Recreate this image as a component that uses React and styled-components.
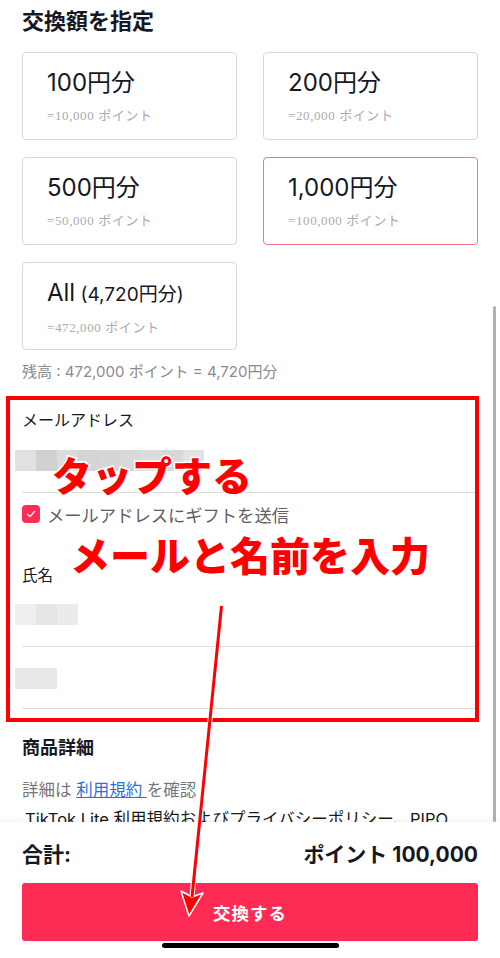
import React from 'react';
import styled, { createGlobalStyle } from 'styled-components';

const GlobalStyle = createGlobalStyle`
  html, body {
    margin: 0;
    padding: 0;
    background: #ffffff;
  }
  body {
    font-family: "Inter", "Noto Sans CJK JP", sans-serif;
    color: #161823;
  }
`;

const Page = styled.div`
  position: relative;
  width: 500px;
  height: 958px;
  display: flex;
  flex-direction: column;
  overflow: hidden;
  background: #ffffff;
`;

const Scroll = styled.div`
  position: relative;
  flex: 1;
  overflow: hidden;
  padding: 0 22px;
`;

const ScrollBar = styled.div`
  position: absolute;
  right: 4px;
  top: 306px;
  bottom: 0;
  width: 3px;
  border-radius: 2px;
  background: #b1b1b1;
`;

const Title = styled.h2`
  margin: 7px 0 0;
  font-size: 22px;
  line-height: 28px;
  font-weight: 700;
`;

const Grid = styled.div`
  margin-top: 17px;
  display: grid;
  grid-template-columns: 215px 215px;
  column-gap: 26px;
  row-gap: 17px;
`;

const Card = styled.div`
  box-sizing: border-box;
  height: 88px;
  padding: 15px 24px 0;
  border: 1px solid ${p => (p.$active ? '#f3758c' : '#d8d8d8')};
  border-radius: 4px;
  background: #fff;
`;

const Amount = styled.div`
  font-size: 24px;
  line-height: 30px;
  font-weight: 400;
  color: #161823;
  white-space: nowrap;

  small {
    font-size: 19px;
  }
`;

const Points = styled.div`
  margin-top: 9px;
  font-family: "Liberation Serif", "Noto Sans CJK JP", serif;
  font-size: 13px;
  line-height: 18px;
  color: #ababab;
  letter-spacing: 0.6px;
`;

const Balance = styled.div`
  margin-top: 12px;
  font-size: 15px;
  line-height: 20px;
  color: #8a8b91;
`;

const Form = styled.div`
  position: relative;
  margin-top: 14px;
  height: 326px;
  box-sizing: border-box;
  padding-top: 13px;
`;

const Highlight = styled.div`
  position: absolute;
  left: -16px;
  right: -1px;
  top: 0;
  bottom: 0;
  border: 4px solid #ff0000;
  pointer-events: none;
`;

const Label = styled.div`
  font-size: ${p => p.$size || 16}px;
  line-height: 22px;
  color: #161823;
  margin-top: ${p => p.$top || 0}px;
`;

const Field = styled.div`
  box-sizing: border-box;
  height: ${p => p.$h}px;
  padding-top: ${p => p.$pad}px;
  border-bottom: 1.5px solid #dcdcdc;
`;

const Mosaic = styled.div`
  display: flex;
  margin-left: -7px;
  height: 21px;
`;

const Cell = styled.span`
  width: 21px;
  height: 21px;
  background: ${p => p.$c};
`;

const CheckRow = styled.label`
  display: flex;
  align-items: center;
  gap: 7px;
  margin-top: 10px;
  height: 22px;
  font-size: 17.3px;
  color: #5e5f66;
`;

const Box = styled.span`
  flex: none;
  width: 18px;
  height: 18px;
  border-radius: 4px;
  background: #fe2c55;
  display: flex;
  align-items: center;
  justify-content: center;
`;

const Callout = styled.div`
  position: absolute;
  left: ${p => p.$x}px;
  top: ${p => p.$y}px;
  font-size: 40px;
  line-height: 40px;
  font-weight: 900;
  color: #ff0000;
  white-space: nowrap;
  -webkit-text-stroke: 3px #ffffff;
  paint-order: stroke fill;
  pointer-events: none;
`;

const SectionTitle = styled.h3`
  margin: 14px 0 0;
  font-size: 18px;
  line-height: 24px;
  font-weight: 700;
`;

const Detail = styled.p`
  margin: ${p => p.$top || 0}px 0 0;
  padding-left: ${p => (p.$dark ? 3 : 0)}px;
  font-size: 16.5px;
  line-height: 22px;
  color: ${p => (p.$dark ? '#161823' : '#75767c')};
  white-space: nowrap;

  a {
    color: #2f6fdd;
    text-decoration: underline;
  }
`;

const Footer = styled.div`
  height: 136px;
  box-sizing: border-box;
  padding: 20px 22px 0;
  background: #fff;
  box-shadow: 0 -2px 6px rgba(0, 0, 0, 0.05);
  display: flex;
  flex-direction: column;
  align-items: stretch;
  position: relative;
`;

const TotalRow = styled.div`
  display: flex;
  justify-content: space-between;
  font-size: 21px;
  line-height: 26px;
  font-weight: 700;
`;

const Button = styled.button`
  margin-top: 15px;
  height: 58px;
  border: none;
  border-radius: 3px;
  background: #fe2c55;
  color: #fff;
  font-family: inherit;
  font-size: 17.5px;
  font-weight: 600;
  letter-spacing: 1px;
`;

const HomeBar = styled.div`
  align-self: center;
  margin-top: 2px;
  width: 177px;
  height: 5px;
  border-radius: 3px;
  background: #000;
`;

const ArrowLayer = styled.svg`
  position: absolute;
  left: 0;
  top: 0;
  pointer-events: none;
`;

const cards = [
  { amount: '100円分', points: '=10,000 ポイント' },
  { amount: '200円分', points: '=20,000 ポイント' },
  { amount: '500円分', points: '=50,000 ポイント' },
  { amount: '1,000円分', points: '=100,000 ポイント', active: true },
  { amount: 'All', extra: ' (4,720円分)', points: '=472,000 ポイント' },
];

const emailCells = ['#e1e1e2', '#d1d1d3', '#dbdbdc', '#d4d4d6', '#d6d6d7', '#d9d9da', '#dcdcdd', '#d8d8d9', '#e2e2e3'];
const nameCells = ['#efeff0', '#e5e5e7', '#ebebec'];
const lastCells = ['#e8e8e9', '#e8e8e9'];

function App() {
  return (
    <Page>
      <GlobalStyle />
      <Scroll>
        <ScrollBar />
        <Title>交換額を指定</Title>
        <Grid>
          {cards.map(c => (
            <Card key={c.points} $active={c.active}>
              <Amount>
                {c.amount}
                {c.extra && <small>{c.extra}</small>}
              </Amount>
              <Points>{c.points}</Points>
            </Card>
          ))}
        </Grid>
        <Balance>残高 : 472,000 ポイント = 4,720円分</Balance>

        <Form>
          <Label>メールアドレス</Label>
          <Field $h={62} $pad={19}>
            <Mosaic>
              {emailCells.map((c, i) => <Cell key={i} $c={c} />)}
            </Mosaic>
          </Field>
          <CheckRow>
            <Box>
              <svg width="12" height="12" viewBox="0 0 12 12">
                <path d="M2.5 6.2 L5 8.6 L9.6 3.4" fill="none" stroke="#fff" strokeWidth="1.4" strokeLinecap="round" strokeLinejoin="round" />
              </svg>
            </Box>
            メールアドレスにギフトを送信
          </CheckRow>
          <Label $size={15.5} $top={40}>氏名</Label>
          <Field $h={60} $pad={17}>
            <Mosaic>
              {nameCells.map((c, i) => <Cell key={i} $c={c} />)}
            </Mosaic>
          </Field>
          <Field $h={62} $pad={21}>
            <Mosaic>
              {lastCells.map((c, i) => <Cell key={i} $c={c} />)}
            </Mosaic>
          </Field>
          <Highlight />
          <Callout $x={30} $y={61}>タップする</Callout>
          <Callout $x={48} $y={141}>メールと名前を入力</Callout>
        </Form>

        <SectionTitle>商品詳細</SectionTitle>
        <Detail $top={19}>
          詳細は <a>利用規約 </a>を確認
        </Detail>
        <Detail $top={7} $dark>
          TikTok Lite 利用規約およびプライバシーポリシー、PIPO
        </Detail>
      </Scroll>

      <Footer>
        <TotalRow>
          <span>合計:</span>
          <span>ポイント 100,000</span>
        </TotalRow>
        <Button>交換する</Button>
        <HomeBar />
      </Footer>

      <ArrowLayer width="500" height="958" viewBox="0 0 500 958">
        <line x1="221.5" y1="606" x2="192" y2="896" stroke="#fff" strokeWidth="5" />
        <polygon points="181,891 192,897 203,893 189,916" fill="#ff0000" stroke="#fff" strokeWidth="1.5" strokeLinejoin="round" />
        <line x1="221.5" y1="606" x2="192" y2="897" stroke="#ff0000" strokeWidth="3" />
      </ArrowLayer>
    </Page>
  );
}

export default App;
